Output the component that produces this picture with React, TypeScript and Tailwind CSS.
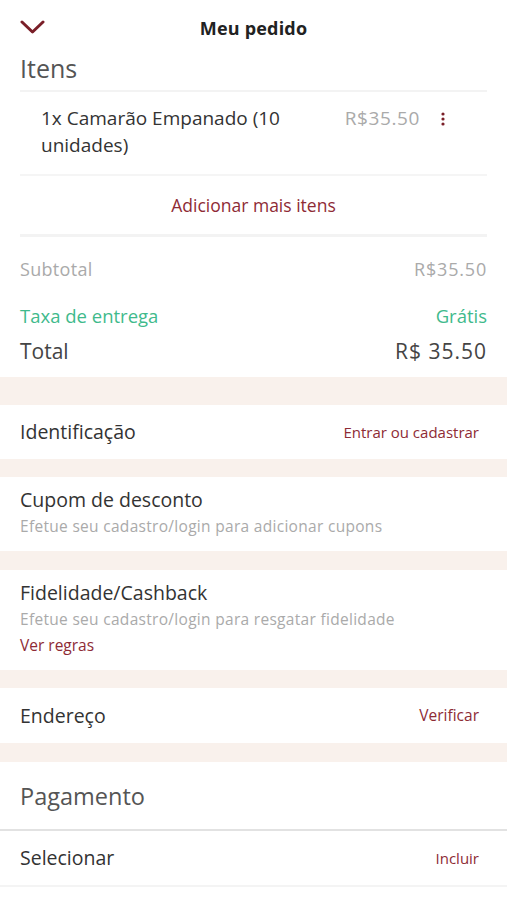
import React from "react";

const red = "text-[#8e2b35]";

function Band({ h = "h-[18px]" }: { h?: string }) {
  return <div className={`${h} bg-[#f9f1ec]`} />;
}

export default function App() {
  return (
    <div className="w-[507px] h-[900px] bg-white overflow-hidden text-[#333]" style={{ fontFamily: '"Open Sans", "Noto Sans", sans-serif' }}>
      {/* Header */}
      <div className="relative h-[52px] flex items-center justify-center">
        <svg className="absolute left-[20px] top-[20px]" width="25" height="14" viewBox="0 0 25 14" fill="none">
          <path d="M2 2 L12.5 12 L23 2" stroke="#7a1f28" strokeWidth="3" strokeLinecap="round" strokeLinejoin="round" />
        </svg>
        <span className="text-[18px] font-bold text-[#222] mt-[4px] tracking-[0.2px]">Meu pedido</span>
      </div>
      <div className="px-[20px]">
        <div className="text-[25px] text-[#555] leading-[32px] pb-[6px]">Itens</div>
        <div className="h-[2px] bg-[#f3f3f3]" />
        <div className="flex items-start pt-[13px] pb-[15px] pl-[21px] pr-[42px]">
          <div className="flex-1 text-[19px] leading-[27px] text-[#333] pr-[40px]">1x Camarão Empanado (10 unidades)</div>
          <div className="text-[19px] leading-[27px] text-[#aaa] tracking-[0.6px]">R$35.50</div>
          <svg className="ml-[21px] mt-[7px]" width="4" height="14" viewBox="0 0 4 14">
            <circle cx="2" cy="2" r="1.6" fill="#7a1f28" />
            <circle cx="2" cy="7" r="1.6" fill="#7a1f28" />
            <circle cx="2" cy="12" r="1.6" fill="#7a1f28" />
          </svg>
        </div>
        <div className="h-[2px] bg-[#f5f5f5]" />
        <div className={`h-[58px] flex items-center justify-center text-[17.5px] ${red}`}>Adicionar mais itens</div>
        <div className="h-[3px] bg-[#f3f3f3]" />
        <div className="flex justify-between text-[18px] text-[#aaa] pt-[20px] leading-[24px]">
          <span className="tracking-[0.3px]">Subtotal</span>
          <span className="tracking-[0.8px]">R$35.50</span>
        </div>
        <div className="flex justify-between text-[18.5px] text-[#3fba8c] pt-[23px] leading-[24px]">
          <span>Taxa de entrega</span>
          <span>Grátis</span>
        </div>
        <div className="flex justify-between text-[21px] text-[#444] pt-[9px] leading-[28px] pb-[12px]">
          <span>Total</span>
          <span className="tracking-[1px]">R$ 35.50</span>
        </div>
      </div>
      <Band h="h-[28px]" />
      {/* Identificação */}
      <div className="h-[54px] flex items-center justify-between pl-[20px] pr-[28px]">
        <span className="text-[19.5px] text-[#333]">Identificação</span>
        <span className={`text-[15px] ${red}`}>Entrar ou cadastrar</span>
      </div>
      <Band />
      {/* Cupom */}
      <div className="h-[74px] px-[20px] pt-[10px]">
        <div className="text-[19.5px] leading-[26px] text-[#333]">Cupom de desconto</div>
        <div className="text-[15.5px] leading-[22px] text-[#aaa] mt-[2px] tracking-[0.3px]">Efetue seu cadastro/login para adicionar cupons</div>
      </div>
      <Band h="h-[19px]" />
      {/* Fidelidade */}
      <div className="h-[100px] px-[20px] pt-[10px]">
        <div className="text-[19.5px] leading-[26px] text-[#333]">Fidelidade/Cashback</div>
        <div className="text-[15.5px] leading-[22px] text-[#aaa] mt-[2px] tracking-[0.3px]">Efetue seu cadastro/login para resgatar fidelidade</div>
        <div className={`text-[15.5px] leading-[22px] mt-[4px] ${red}`}>Ver regras</div>
      </div>
      <Band />
      {/* Endereço */}
      <div className="h-[55px] flex items-center justify-between pl-[20px] pr-[28px]">
        <span className="text-[19.5px] text-[#333]">Endereço</span>
        <span className={`text-[15.5px] ${red}`}>Verificar</span>
      </div>
      <Band h="h-[19px]" />
      {/* Pagamento */}
      <div className="h-[69px] flex items-center pl-[20px] pt-[2px] border-b-2 border-[#e2e2e2]">
        <span className="text-[23.5px] text-[#555]">Pagamento</span>
      </div>
      <div className="h-[56px] flex items-center justify-between pl-[20px] pr-[28px] border-b-2 border-[#f4f4f4]">
        <span className="text-[19.5px] text-[#333]">Selecionar</span>
        <span className={`text-[15px] ${red}`}>Incluir</span>
      </div>
    </div>
  );
}
